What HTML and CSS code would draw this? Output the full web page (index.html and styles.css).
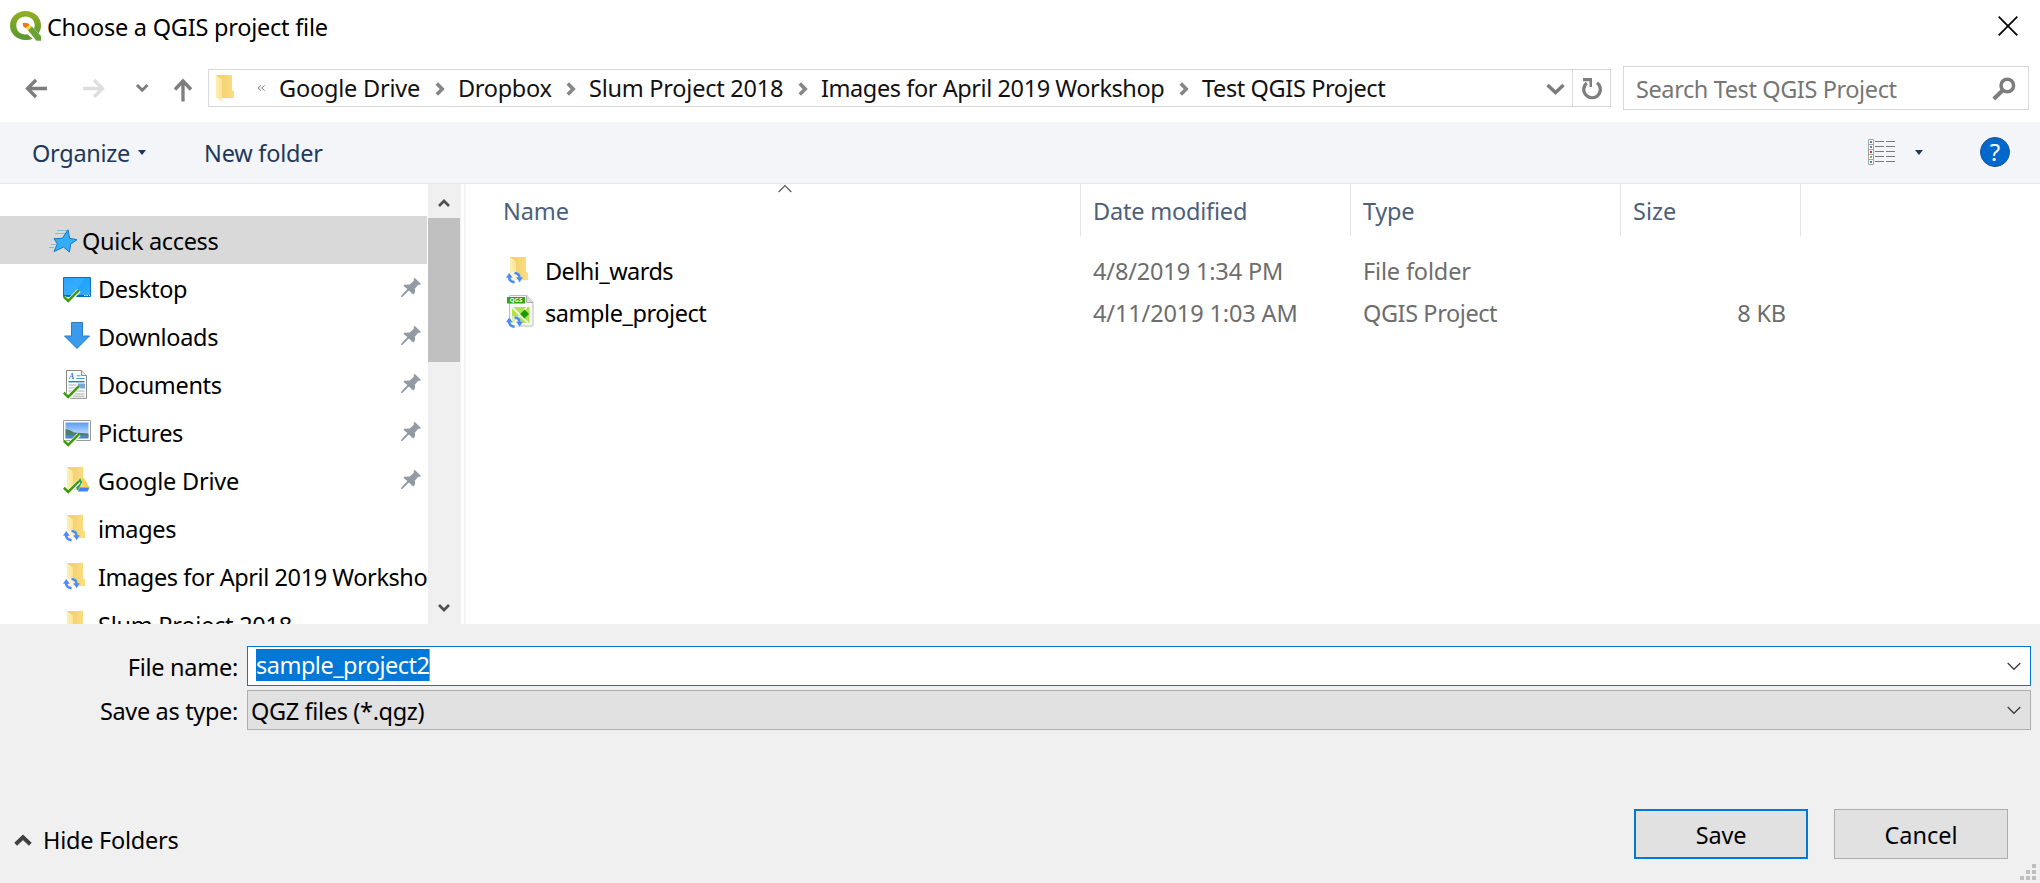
FILE: index.html
```html
<!DOCTYPE html>
<html lang="en">
<head>
<meta charset="utf-8">
<title>Choose a QGIS project file</title>
<link rel="stylesheet" href="styles.css">
</head>
<body>
<svg class="sprite" aria-hidden="true">
  <defs>
    <linearGradient id="gFolder" x1="0" y1="0" x2="1" y2="0"><stop offset="0" stop-color="#f0cc68"/><stop offset="1" stop-color="#fddf84"/></linearGradient>
    <linearGradient id="gFlap" x1="0" y1="0" x2="1" y2="0"><stop offset="0" stop-color="#fff0b0"/><stop offset="1" stop-color="#fbe29b"/></linearGradient>
    <linearGradient id="gQ" x1="0" y1="0" x2="0" y2="1"><stop offset="0" stop-color="#93b023"/><stop offset="1" stop-color="#589632"/></linearGradient>
    <linearGradient id="gDesk" x1="0" y1="0" x2="1" y2="1"><stop offset="0" stop-color="#0f9bff"/><stop offset="1" stop-color="#35adff"/></linearGradient>
    <linearGradient id="gSky" x1="0" y1="0" x2="0" y2="1"><stop offset="0" stop-color="#5a9bf5"/><stop offset="1" stop-color="#e6f3fb"/></linearGradient>
  </defs>
  <symbol id="folder" viewBox="0 0 28 28">
    <path d="M4 1h16v14.500l2 2V23l1 1H8z" fill="url(#gFolder)"/>
    <path d="M4 1l6 4.500V23l-.5 4.500L4 23.500z" fill="url(#gFlap)"/>
  </symbol>
  <symbol id="check" viewBox="0 0 28 28">
    <path d="M.8 22.500l4.400 4.100L16 15.500" fill="none" stroke="#fff" stroke-width="4.500"/>
    <path d="M.8 21.800l4.400 4.200L16 15.200" fill="none" stroke="#3f9c0c" stroke-width="2.600"/>
  </symbol>
  <symbol id="sync" viewBox="0 0 28 28">
    <circle cx="8.300" cy="21.500" r="6.200" fill="#fff" opacity=".55"/>
    <path d="M3 20.500c0 3.200 2 5.400 5.600 5.700M8.500 17c3.300 0 4.900 1.700 5 4.800" fill="none" stroke="#4a8cf7" stroke-width="2.500"/>
    <path d="M0 21.800L3.200 17l3.600 4.800zM10.300 21.200h6.500l-3.200 5z" fill="#4a8cf7"/>
  </symbol>
  <symbol id="pin" viewBox="0 0 20 20">
    <path d="M14 0l6 6-1.200.9-1.300-.3-3.600 3.900.2 3.300-1.600 2.900-4.600-4.300L1.300 19H0v-1l6.400-7L2.600 8 3 6.800l5.600-.4 4.300-3.700L12.700 1z" fill="#919ba4"/>
  </symbol>
  <symbol id="thinDown" viewBox="0 0 14 9"><path d="M.7 1l6.300 6.300L13.300 1" fill="none" stroke="#3c3c3c" stroke-width="1.300"/></symbol>
  <symbol id="crumb" viewBox="0 0 10 14"><path d="M1.800 1.500L7.200 7l-5.400 5.500" fill="none" stroke="#868686" stroke-width="3.600"/></symbol>
</svg>

<div class="dialog">
  <header class="titlebar">
    <svg class="logo" viewBox="0 0 31 30">
      <path d="M15.500 0C24.500 0 31 6.500 31 14.500c0 3-.9 5.600-2.300 7.900L24 17.500c.5-1 .7-2 .7-3.100 0-5.200-3.900-9-9.200-9s-9.200 3.800-9.200 9 3.900 9 9.200 9l2-.2 5.200 4.600A16 16 0 0 1 15.500 29C6.500 29 0 22.500 0 14.500S6.500 0 15.500 0z" fill="url(#gQ)"/>
      <path d="M17.300 18.500l4.300-3.300L31 25v4.700h-4.500z" fill="#6aa137"/>
      <path d="M15.800 16.900l3.600-3.300 2.500 2.200-3.800 3.600z" fill="#f5e03a"/>
      <path d="M12.700 11.700l5.300.5 1.500 1.600-4 3.500-2.400-2z" fill="#ee7913"/>
    </svg>
    <span class="t-title">Choose a QGIS project file</span>
    <svg class="close" viewBox="0 0 20 20"><path d="M.7.700l18.600 18.600M19.300.700L.7 19.300" stroke="#000" stroke-width="1.700"/></svg>
  </header>

  <nav class="navrow">
    <svg class="arrows" viewBox="0 0 180 26">
      <path d="M2 10.500h20M11 2l-8.500 8.500L11 19" fill="none" stroke="#7d7d7d" stroke-width="3.300"/>
      <path d="M58 10.500h20M69 2l8.500 8.500L69 19" fill="none" stroke="#dedede" stroke-width="3.300"/>
      <path d="M112 7l5.200 5.200L122.500 7" fill="none" stroke="#7d7d7d" stroke-width="3"/>
      <path d="M158 23.500V4M150 11.500L158 3l8 8.500" fill="none" stroke="#7d7d7d" stroke-width="3.300"/>
    </svg>
    <div class="address">
      <svg class="ic addr-folder"><use href="#folder"/></svg>
      <svg class="laquo" viewBox="0 0 8 6"><path d="M4 .5L1 3l3 2.500M7.600.5L4.600 3l3 2.500" fill="none" stroke="#777" stroke-width="1"/></svg>
      <span class="crumb c1">Google Drive</span>
      <svg class="sep"><use href="#crumb"/></svg>
      <span class="crumb c2">Dropbox</span>
      <svg class="sep"><use href="#crumb"/></svg>
      <span class="crumb c3">Slum Project 2018</span>
      <svg class="sep"><use href="#crumb"/></svg>
      <span class="crumb c4">Images for April 2019 Workshop</span>
      <svg class="sep"><use href="#crumb"/></svg>
      <span class="crumb c5">Test QGIS Project</span>
      <svg class="drop" viewBox="0 0 19 12"><path d="M1.500 2l8 7.500 8-7.500" fill="none" stroke="#7d7d7d" stroke-width="3.500"/></svg>
      <span class="refresh">
        <svg viewBox="0 0 20 22"><path d="M15 4.800A8.300 8.300 0 1 1 4.800 5" fill="none" stroke="#7d7d7d" stroke-width="3.200"/><path d="M1 0h9v9H7.500V3.300H1z" fill="#7d7d7d"/></svg>
      </span>
    </div>
    <div class="search">
      <span class="t-search">Search Test QGIS Project</span>
      <svg class="mag" viewBox="0 0 24 24"><circle cx="15.300" cy="8.500" r="6.300" fill="none" stroke="#7d7d7d" stroke-width="3.500"/><path d="M11 13L1.800 22" stroke="#7d7d7d" stroke-width="4"/></svg>
    </div>
  </nav>

  <div class="toolbar">
    <span class="t-org">Organize</span>
    <svg class="tri" viewBox="0 0 8 5"><path d="M0 0h8L4 5z" fill="#1e395b"/></svg>
    <span class="t-new">New folder</span>
    <svg class="view" viewBox="0 0 28 26">
      <path d="M.5.500h5v25h-5zM.5 5.500h5M.5 10.500h5M.5 15.500h5M.5 20.500h5" fill="#fff" stroke="#a3a3a3"/>
      <path d="M7 2.500h9M18 2.500h9M7 7.500h9M18 7.500h9M7 12.500h9M18 12.500h9M7 17.500h9M18 17.500h9M7 22.500h9M18 22.500h9" stroke="#767b7b"/>
      <path d="M2 2h2v2H2zM2 22h2v2H2z" fill="#3c8c9a"/><path d="M2 7h2v2H2z" fill="#6f79b5"/><path d="M2 12h2v2H2z" fill="#c63b1e"/><path d="M2 17h2v2H2z" fill="#9a9a62"/>
    </svg>
    <svg class="tri tri2" viewBox="0 0 8 5"><path d="M0 0h8L4 5z" fill="#1e395b"/></svg>
    <span class="help">?</span>
  </div>

  <main class="panes">
    <ul class="tree">
      <li class="quick">
        <svg class="star" viewBox="0 0 30 24"><path d="M20 .8l1.700 8.500 7.300 1.400-6.400 4.500-1.100 7.800-6-4.900L6 22.600l3.300-7.800L6 9.700l8.300-.4z" fill="#35adf5" stroke="#1479c9"/><path d="M9 1.500h10M7 4.500h10M3 15.500h5M1 18.500h5" stroke="#7bc0ea"/></svg>
        <span class="s0">Quick access</span>
      </li>
      <li><svg class="ic" viewBox="0 0 28 28"><path d="M.5 2.500h27v19H.5z" fill="url(#gDesk)" stroke="#0b72b8"/><path d="M22 3L8 21H1V3z" fill="#fff" opacity=".1"/><path d="M1 20.500h26" stroke="#0b6cb0"/><path d="M21 20.500h6" stroke="#fff" stroke-dasharray="1.500 1"/><use href="#check"/></svg><span class="s1">Desktop</span><svg class="pin"><use href="#pin"/></svg></li>
      <li><svg class="ic" viewBox="0 0 28 28"><path d="M8.500-.5h11V13h7L14 25.500 1.500 13h7z" fill="#3a9aec" stroke="#2a7cc4"/></svg><span class="s2">Downloads</span><svg class="pin"><use href="#pin"/></svg></li>
      <li><svg class="ic" viewBox="0 0 28 28"><path d="M3.500-.5h15l5 5v22.800h-20z" fill="#fff" stroke="#8b8b8b"/><path d="M18.500-.5v5h5" fill="#eee" stroke="#8b8b8b"/><text x="6" y="8" class="doc-a">A</text><path d="M13.500 4.800h4M13.500 7.500h8" stroke="#3f9bd6"/><path d="M5.500 10.700h16" stroke="#1e7fc4" stroke-width="1.400"/><path d="M5.500 14h8M5.500 17h8M5.500 20h6M14 20h7.500M10 23h11.500M10 25.200h11.500" stroke="#aaa"/><path d="M15 12.500h7v5h-7z" fill="#76a7d8"/><use href="#check"/></svg><span class="s3">Documents</span><svg class="pin"><use href="#pin"/></svg></li>
      <li><svg class="ic" viewBox="0 0 28 28"><path d="M.5 1.500h27v20H.5z" fill="#fff" stroke="#9b9b9b"/><path d="M2.500 3.500h23v16h-23z" fill="url(#gSky)"/><path d="M2.500 10q5 .5 8.500 3.500l14.500 1v2h-23z" fill="#4d7c67"/><path d="M2.500 16h23v3.500h-23z" fill="#4a86bd"/><use href="#check"/></svg><span class="s4">Pictures</span><svg class="pin"><use href="#pin"/></svg></li>
      <li><svg class="ic" viewBox="0 0 28 28"><use href="#folder" y="-1"/><path d="M17 11h4l5.500 9.500h-5z" fill="#ffd04b"/><path d="M17 11l2 4.200-4.200 8.300-2-3.500z" fill="#12a366"/><path d="M17 20.500h9.500L24.500 24.500h-9.700z" fill="#3f7ff2"/><use href="#check" y="-1"/></svg><span class="s5">Google Drive</span><svg class="pin"><use href="#pin"/></svg></li>
      <li><svg class="ic" viewBox="0 0 28 28"><use href="#folder" y="-1"/><use href="#sync" y="-1"/></svg><span class="s6">images</span></li>
      <li><svg class="ic" viewBox="0 0 28 28"><use href="#folder" y="-1"/><use href="#sync" y="-1"/></svg><span class="s7">Images for April 2019 Worksho</span></li>
      <li><svg class="ic" viewBox="0 0 28 28"><use href="#folder" y="-1"/><use href="#sync" y="-1"/></svg><span class="s8">Slum Project 2018</span></li>
    </ul>
    <div class="scroll">
      <svg class="sb-up" viewBox="0 0 12 10"><path d="M1 8l5-5 5 5" fill="none" stroke="#505050" stroke-width="2.700"/></svg>
      <div class="thumb"></div>
      <svg class="sb-down" viewBox="0 0 12 10"><path d="M1 2l5 5 5-5" fill="none" stroke="#505050" stroke-width="2.700"/></svg>
    </div>
    <section class="files">
      <div class="row head">
        <span class="name"><b class="h1">Name</b><svg class="sort" viewBox="0 0 14 9"><path d="M.7 8L7 1.500 13.300 8" fill="none" stroke="#555" stroke-width="1.200"/></svg></span>
        <span class="col"><b class="h2">Date modified</b></span><span class="col"><b class="h3">Type</b></span><span class="col size"><b class="h4">Size</b></span>
      </div>
      <div class="row file">
        <span class="name"><svg class="ic" viewBox="0 0 28 28"><use href="#folder"/><use href="#sync"/></svg><b class="f1">Delhi_wards</b></span>
        <span class="col"><b class="f2">4/8/2019 1:34 PM</b></span><span class="col"><b class="f3">File folder</b></span><span class="col size"></span>
      </div>
      <div class="row file">
        <span class="name"><svg class="ic qgs" viewBox="0 0 28 32"><path d="M3.500.500H21l6 6.500v24H3.500z" fill="#f7f7f7" stroke="#bdbdbd"/><path d="M20.500.500v7H27" fill="#ddd" stroke="#aaa"/><path d="M1 2h18v6.500H1z" fill="#35a115"/><text x="3.800" y="7.300" class="qgs-t">QGS</text><path d="M6 12h17.500v16H6z" fill="#b4e04e"/><path d="M6 12l8 8-5 8M14 20l8 8M14 20l7-8" fill="none" stroke="#effad0" stroke-width="1.800"/><path d="M18.500 14.500l4.500 4.500-4.500 4.500L14 19z" fill="#189a08"/><use href="#sync" y="3.500"/></svg><b class="f4">sample_project</b></span>
        <span class="col"><b class="f5">4/11/2019 1:03 AM</b></span><span class="col"><b class="f6">QGIS Project</b></span><span class="col size kb"><b class="f7">8 KB</b></span>
      </div>
    </section>
  </main>

  <footer class="bottom">
    <div class="field"><label class="l1">File name:</label><div class="box input"><span class="sel">sample_project2</span><svg class="dd"><use href="#thinDown"/></svg></div></div>
    <div class="field"><label class="l2">Save as type:</label><div class="box combo"><span class="qgz">QGZ files (*.qgz)</span><svg class="dd"><use href="#thinDown"/></svg></div></div>
    <div class="actions">
      <svg class="hide-ic" viewBox="0 0 18 12"><path d="M1.700 10.300L9 3.200l7.300 7.100" fill="none" stroke="#404040" stroke-width="4"/></svg>
      <span class="hide">Hide Folders</span>
      <button class="btn primary"><span class="b1">Save</span></button>
      <button class="btn"><span class="b2">Cancel</span></button>
    </div>
    <svg class="grip" viewBox="0 0 16 16"><path d="M12 0h4v4h-4zM6 6h4v4H6zM12 6h4v4h-4zM0 12h4v4H0zM6 12h4v4H6zM12 12h4v4h-4z" fill="#bfbfbf"/></svg>
  </footer>
</div>
</body>
</html>
```
FILE: styles.css
```css
* { box-sizing: border-box; }
body {
  margin: 0;
  background: #fff;
  color: #000;
  font: 23.5px/32px "Noto Sans", "Open Sans", sans-serif;
  white-space: nowrap;
}
b { font-weight: 400; }
svg { display: block; flex: none; overflow: visible; }
.sprite { position: absolute; width: 0; height: 0; }
.dialog { position: relative; width: 2040px; height: 883px; overflow: hidden; display: flex; flex-direction: column; }
.ic { width: 28px; height: 28px; }

.titlebar { height: 52px; display: flex; align-items: flex-start; padding: 11px 22px 0 10px; }
.logo { width: 31px; height: 30px; margin-right: 6px; }
.t-title { letter-spacing: -.23px; }
.close { width: 20px; height: 20px; margin: 5px 0 0 auto; }

.navrow { height: 70px; display: flex; align-items: flex-start; padding: 14px 11px 0 25px; }
.arrows { width: 180px; height: 26px; margin: 12px 3px 0 0; }
.address { width: 1403px; height: 38px; margin-top: 3px; border: 1px solid #d9d9d9; display: flex; align-items: center; color: #111; }
.addr-folder { margin: 0 17px 0 3px; }
.laquo { width: 8px; height: 6px; margin-right: 14px; }
.crumb { flex: none; }
.c1 { width: 156px; letter-spacing: -.2px; }
.c2 { width: 108px; letter-spacing: -.3px; }
.c3 { width: 209px; letter-spacing: -.24px; }
.c4 { width: 358px; letter-spacing: -.42px; }
.c5 { letter-spacing: -.38px; }
.sep { width: 10px; height: 14px; margin: 2px 13px 0 0; }
.drop { width: 19px; height: 12px; margin: 2px 7px 0 auto; }
.refresh { width: 38px; height: 36px; border-left: 1px solid #d9d9d9; padding: 8px 0 0 9px; flex: none; }
.refresh svg { width: 20px; height: 22px; }
.search { width: 406px; height: 44px; margin-left: 12px; border: 1px solid #d9d9d9; display: flex; padding: 6px 12px 0 12px; color: #767676; }
.t-search { letter-spacing: -.4px; }
.mag { width: 24px; height: 24px; margin: 4px 0 0 auto; }

.toolbar { height: 62px; background: #f4f5f8; border-bottom: 1px solid #e6e7ea; display: flex; align-items: flex-start; padding: 15px 30px 0 32px; color: #1e395b; }
.t-org { width: 106px; letter-spacing: -.3px; }
.tri { width: 8px; height: 5px; margin-top: 13px; }
.t-new { margin-left: 58px; letter-spacing: -.22px; }
.view { width: 28px; height: 26px; margin: 2px 0 0 auto; }
.tri2 { margin: 13px 57px 0 19px; }
.help { width: 30px; height: 30px; border-radius: 50%; border: 1px solid #15518c; background: #0168cd; color: #fff; font-size: 24px; line-height: 28px; text-align: center; }

.panes { height: 440px; display: flex; overflow: hidden; }
.tree { width: 428px; margin: 0; padding: 32px 1px 0 0; list-style: none; overflow: hidden; flex: none; }
.tree li { height: 48px; display: flex; align-items: flex-start; padding: 9px 6px 0 63px; }
.tree li .ic { margin: 2px 7px 0 0; }
.tree .quick { background: #d9d9d9; padding-left: 48px; }
.star { width: 30px; height: 24px; margin: 4px 4px 0 0; }
.pin { width: 20px; height: 20px; margin: 5px 0 0 auto; }
.doc-a { font: italic bold 8px "Liberation Serif", serif; fill: #1e7fc4; }
.s0, .s2, .s3 { letter-spacing: -.33px; }
.s1 { letter-spacing: -.3px; }
.s4 { letter-spacing: -.42px; }
.s5 { letter-spacing: -.2px; }
.s6 { letter-spacing: -.35px; }
.s7 { letter-spacing: -.42px; }
.s8 { letter-spacing: -.25px; }

.scroll { width: 33px; background: #f0f0f0; display: flex; flex-direction: column; flex: none; }
.sb-up { width: 12px; height: 10px; margin: 14px 0 10px 10px; }
.thumb { width: 32px; height: 144px; background: #c0c0c0; }
.sb-down { width: 12px; height: 10px; margin: auto 0 11px 10px; }

.files { flex: 1; border-left: 2px solid #f5f5f5; margin-left: 3px; }
.row { display: flex; }
.row .name { width: 614px; display: flex; position: relative; flex: none; }
.row .col { width: 270px; padding-left: 12px; flex: none; }
.row .size { width: 181px; }
.head { height: 52px; color: #4c607a; margin-bottom: 19px; }
.head .name { padding: 11px 0 0 37px; }
.head .col { border-left: 1px solid #e5e5e5; padding-top: 11px; }
.head .size { border-right: 1px solid #e5e5e5; }
.h1 { letter-spacing: -.1px; }
.h2 { letter-spacing: -.2px; }
.h3 { letter-spacing: -.3px; }
.sort { position: absolute; left: 312px; top: 0; width: 14px; height: 9px; }
.file { height: 42px; color: #6d6d6d; }
.file .name { color: #000; padding-left: 40px; }
.file .name .ic { margin: 1px 11px 0 0; }
.file .name .qgs { height: 32px; margin-top: -2px; }
.file .col { padding-left: 13px; }
.file .kb { text-align: right; padding-right: 15px; }
.f1 { letter-spacing: -.55px; }
.f2 { letter-spacing: -.15px; }
.f3 { letter-spacing: -.15px; }
.f4 { letter-spacing: -.45px; }
.f5 { letter-spacing: -.12px; }
.f6 { letter-spacing: -.42px; }
.f7 { letter-spacing: -.15px; }
.qgs-t { font: bold 6px "Noto Sans", sans-serif; fill: #fff; }

.bottom { height: 259px; background: #f0f0f0; padding-top: 22px; position: relative; }
.field { display: flex; height: 44px; }
.field label { width: 247px; padding: 5px 9px 0 0; text-align: right; }
.l1 { letter-spacing: -.27px; }
.l2 { letter-spacing: -.33px; }
.box { width: 1784px; height: 40px; border: 1px solid #adadad; background: #e1e1e1; display: flex; align-items: flex-start; }
.box.input { border-color: #0078d7; background: #fff; padding: 2px 0 0 8px; }
.box.combo { padding: 4px 0 0 3px; }
.sel { width: 174px; height: 32px; line-height: 33px; background: #0078d7; color: #fff; border-right: 1px solid #e08a3c; letter-spacing: -.5px; }
.qgz { letter-spacing: -.35px; }
.dd { width: 14px; height: 9px; margin: 13px 9px 0 auto; }
.combo .dd { margin-top: 11px; }
.actions { display: flex; align-items: flex-start; margin-top: 75px; padding: 0 32px 0 14px; }
.hide-ic { width: 18px; height: 12px; margin: 25px 11px 0 0; }
.hide { margin: 15px auto 0 0; letter-spacing: -.25px; }
.btn { width: 174px; height: 50px; margin-left: 26px; padding: 2px 0 0; border: 1px solid #adadad; background: #e1e1e1; font: inherit; color: #000; border-radius: 0; }
.btn.primary { border: 2px solid #0078d7; }
.b1 { letter-spacing: -.2px; }
.grip { position: absolute; left: 2020px; top: 240px; width: 16px; height: 16px; }
```
